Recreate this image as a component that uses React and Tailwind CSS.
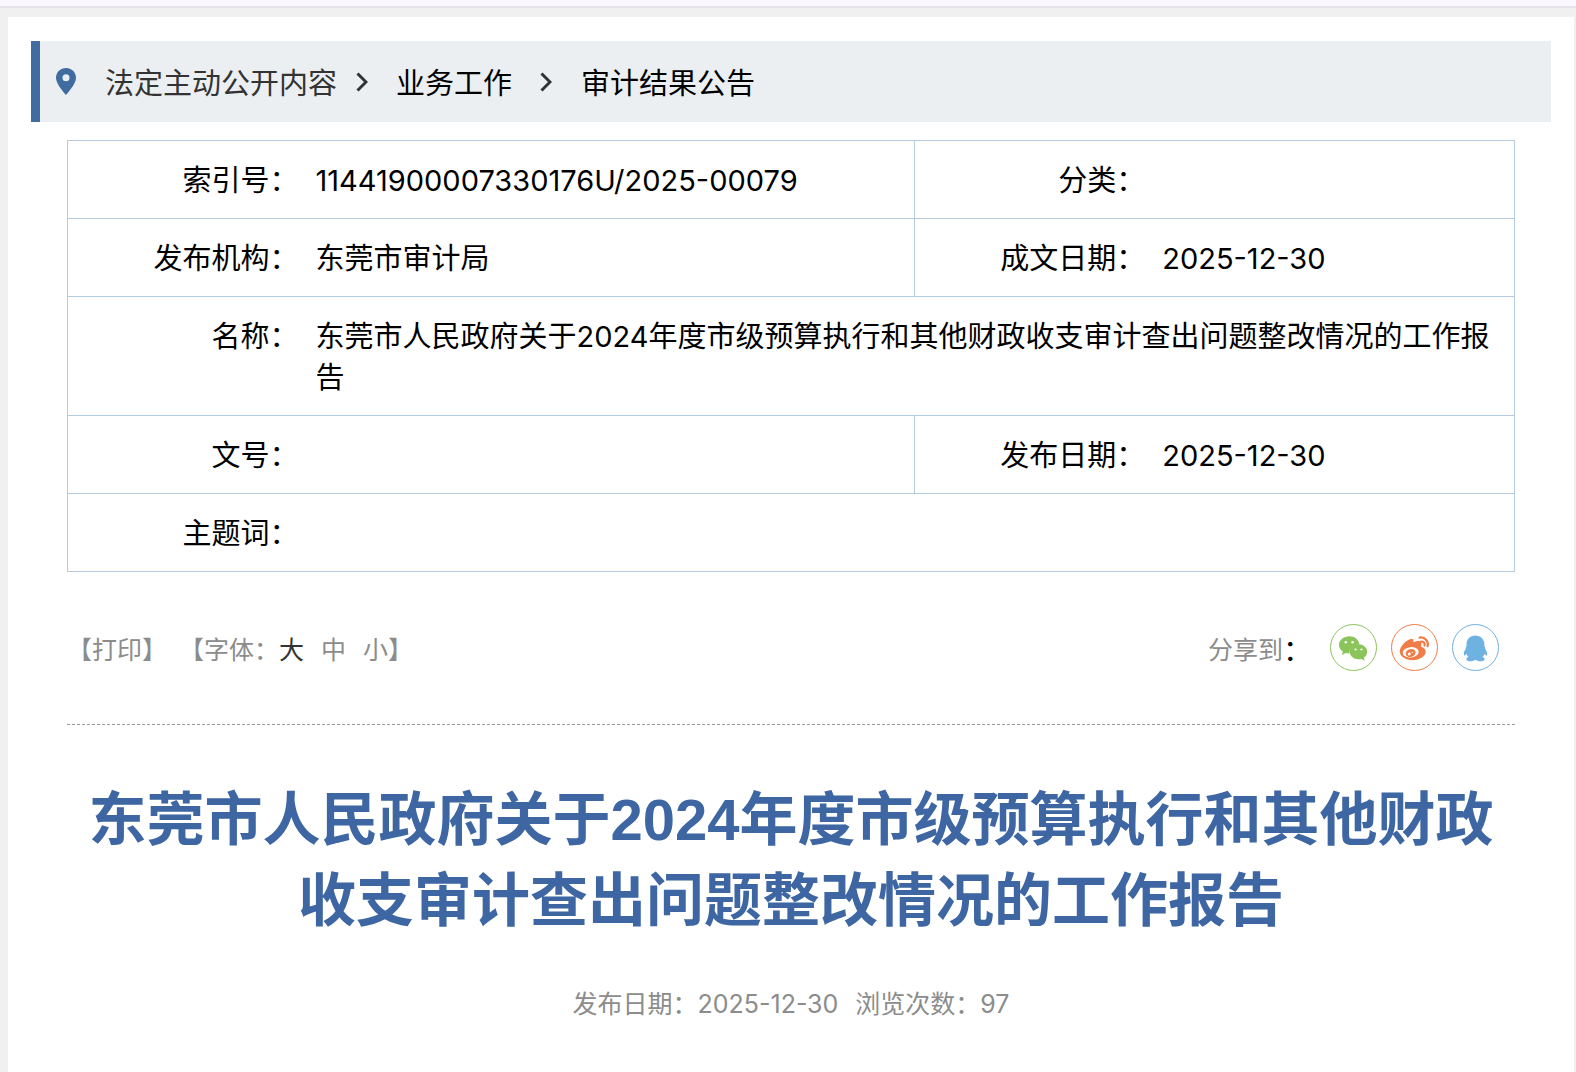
import { useState } from "react";

const sizes = ["大", "中", "小"];

function Pin() {
  return (
    <svg viewBox="0 0 20 27" className="h-[27px] w-5 shrink-0 fill-[#416c9f]" aria-hidden="true">
      <path
        fillRule="evenodd"
        d="M10 0C4.4 0 0 4.3 0 9.8 0 16.500 10 27 10 27s10-10.500 10-17.200C20 4.300 15.600 0 10 0Zm0 6.200a3.500 3.500 0 1 1 0 7 3.500 3.500 0 0 1 0-7Z"
      />
    </svg>
  );
}

function Chevron() {
  return (
    <svg viewBox="0 0 12 20" className="h-5 w-3 shrink-0 fill-none stroke-[#333] stroke-3" aria-hidden="true">
      <path d="M1.500 1.500 10 10l-8.500 8.500" />
    </svg>
  );
}

function WechatIcon() {
  return (
    <svg viewBox="1 1 45 45" className="size-full" aria-hidden="true">
      <path
        fill="#8cc45c"
        d="M19.500 12.300c-5.900 0-10.500 3.900-10.500 8.700 0 2.700 1.500 5 3.900 6.600l-1.100 3.500 4-2.100c1.200.3 2.400.5 3.700.5-.3-4.900 4.100-8.900 10-8.900-.8-4.800-4.900-8.300-10-8.300Z"
      />
      <path
        fill="#8cc45c"
        d="M28.500 20.300c-4.900 0-8.800 3.300-8.800 7.500s3.900 7.500 8.800 7.500c1 0 2-.2 3-.4l3.300 1.800-.9-2.900c2-1.400 3.300-3.500 3.300-6 0-4.200-3.900-7.500-8.700-7.500Z"
      />
      <g fill="#fff">
        <circle cx="15.800" cy="18.200" r="1.300" />
        <circle cx="22.600" cy="18.200" r="1.300" />
        <circle cx="25.600" cy="25.500" r="1.100" />
        <circle cx="31.400" cy="25.500" r="1.100" />
      </g>
    </svg>
  );
}

function WeiboIcon() {
  return (
    <svg viewBox="1 1 45 45" className="size-full" aria-hidden="true">
      <path
        fill="#f07c48"
        d="M30.800 23c-.6-.2-1-.4-.7-1.100.6-1.700.6-2.900-.1-3.800-1.200-1.500-4-1.300-7 0 0 0-1 .5-.8-.3.500-1.500.3-2.400-.5-2.700-4-1.500-13 6.300-13 12.500 0 5.200 6.300 8.600 12.500 8.600 8 0 13.500-4.200 13.500-8.400 0-2.500-1.800-4.200-3.900-4.800Z"
      />
      <ellipse cx="19.700" cy="28.300" rx="8" ry="5.200" fill="#fff" transform="rotate(-6 19.700 28.300)" />
      <ellipse cx="19.600" cy="29" rx="5" ry="4" fill="#f07c48" transform="rotate(-15 19.600 29)" />
      <ellipse cx="18.300" cy="30" rx="1.600" ry="1.300" fill="#fff" transform="rotate(-25 18.300 30)" />
      <circle cx="21.200" cy="28.400" r=".6" fill="#fff" />
      <g fill="none" stroke="#f07c48" strokeWidth="2.200" strokeLinecap="round">
        <path d="M28.600 13.600c5.200-.9 9.300 3.600 8 8.600" />
        <path d="M30 17.700c2.500-.4 4.200 1.500 3.500 3.800" />
      </g>
    </svg>
  );
}

function QqIcon() {
  return (
    <svg viewBox="1 1 45 45" className="size-full" aria-hidden="true">
      <path
        fill="#6eb2e2"
        d="M23.300 11.500c-5.300 0-8.800 3.900-8.800 8.900v1.800c-.9.800-.9 1.800-.7 2.500-1.500 1.900-2.200 4.300-1.900 6.200.2 1.200 1.400.4 2.600-1.200.3 1.200.9 2.300 1.900 3.300-1.500.5-2.100 1.300-2 2.200.2 1.400 1.900 2 4.200 2 2 0 3.900-.6 4.900-1.500 1 .9 2.900 1.500 4.900 1.500 2.300 0 4-.6 4.200-2 .1-.9-.5-1.700-2-2.200 1-1 1.600-2.100 1.900-3.300 1.200 1.600 2.300 2.400 2.500 1.200.3-1.900-.4-4.300-1.900-6.200.2-.7.200-1.700-.7-2.500v-1.800c0-5-3.800-8.900-9.100-8.900Z"
      />
    </svg>
  );
}

function Label({ children }) {
  return (
    <th scope="row" className="pt-[19px] pr-2 pb-[17px] text-right align-top font-normal">
      {children}
    </th>
  );
}

function Value({ children, ...rest }) {
  return (
    <td className="border-r border-[#b4cae0] px-[9px] pt-[19px] pb-[17px] align-top" {...rest}>
      {children}
    </td>
  );
}

export default function App() {
  const [size, setSize] = useState("大");

  return (
    <div className="min-h-screen bg-[#f0f0f0] font-[Inter,'Noto_Sans_CJK_SC',sans-serif] text-black">
      <div className="h-2 border-b-2 border-[#e6e1ea] bg-[#fcf8ff]" />
      <main className="mt-[9px] mr-0.5 ml-2 min-h-[1055px] bg-white px-[23px] pt-6">
        <nav
          aria-label="面包屑"
          className="flex h-[81px] items-center border-l-[9px] border-[#416c9f] bg-[#ebeff2] pl-4 text-[29px] leading-[41px]"
        >
          <Pin />
          <a href="#open" className="ml-[29px] pt-[3px] text-[#333]">法定主动公开内容</a>
          <span className="ml-[19px] flex items-center">
            <Chevron />
            <a href="#work" className="ml-7 pt-[3px]">业务工作</a>
          </span>
          <span className="ml-7 flex items-center">
            <Chevron />
            <a href="#audit" className="ml-[29px] pt-[3px]">审计结果公告</a>
          </span>
        </nav>

        <div className="mx-9 mt-[18px]">
          <table className="w-full table-fixed border-collapse border border-[#b4cae0] text-[29px] leading-[41px]">
            <colgroup>
              <col className="w-[239px]" />
              <col className="w-[42%]" />
              <col className="w-[239px]" />
              <col />
            </colgroup>
            <tbody>
              <tr className="border-b border-[#b4cae0]">
                <Label>索引号：</Label>
                <Value>11441900007330176U/2025-00079</Value>
                <Label>分类：</Label>
                <Value />
              </tr>
              <tr className="border-b border-[#b4cae0]">
                <Label>发布机构：</Label>
                <Value>东莞市审计局</Value>
                <Label>成文日期：</Label>
                <Value>2025-12-30</Value>
              </tr>
              <tr className="border-b border-[#b4cae0]">
                <Label>名称：</Label>
                <Value colSpan={3}>东莞市人民政府关于2024年度市级预算执行和其他财政收支审计查出问题整改情况的工作报告</Value>
              </tr>
              <tr className="border-b border-[#b4cae0]">
                <Label>文号：</Label>
                <Value />
                <Label>发布日期：</Label>
                <Value>2025-12-30</Value>
              </tr>
              <tr>
                <Label>主题词：</Label>
                <Value colSpan={3} />
              </tr>
            </tbody>
          </table>

          <div className="mt-[52px] flex items-start justify-between border-b border-dashed border-[#999] pr-4 pb-[46px] text-[25px] text-[#8c8c8c]">
            <div className="flex h-[54px] items-center">
              <button type="button" onClick={() => window.print()}>【打印】</button>
              <span className="ml-3">【字体：</span>
              <span className="flex gap-[17px]">
                {sizes.map((s) => (
                  <button
                    key={s}
                    type="button"
                    onClick={() => setSize(s)}
                    className={s === size ? "text-[#333]" : "text-[#8c8c8c]"}
                  >
                    {s}
                  </button>
                ))}
              </span>
              <span>】</span>
            </div>
            <div className="flex items-start">
              <span className="flex h-[54px] items-center">
                分享到<span className="text-[29px] text-black">：</span>
              </span>
              <div className="ml-[18px] flex gap-3.5">
                <button type="button" aria-label="微信" className="size-[47px] rounded-full border border-[#8cc45c]">
                  <WechatIcon />
                </button>
                <button type="button" aria-label="微博" className="size-[47px] rounded-full border border-[#f07c48]">
                  <WeiboIcon />
                </button>
                <button type="button" aria-label="QQ" className="size-[47px] rounded-full border border-[#6eb2e2]">
                  <QqIcon />
                </button>
              </div>
            </div>
          </div>

          <h1 className="mt-[54px] text-center font-['Liberation_Sans','Noto_Sans_CJK_SC',sans-serif] text-[58px] leading-[81px] font-semibold text-[#3d66a2]">
            东莞市人民政府关于2024年度市级预算执行和其他财政收支审计查出问题整改情况的工作报告
          </h1>
          <p className="mt-[45px] flex justify-center gap-[17px] text-[25px] leading-9 text-[#8c8c8c]">
            <span>发布日期：2025-12-30</span>
            <span>浏览次数：97</span>
          </p>
        </div>
      </main>
    </div>
  );
}
